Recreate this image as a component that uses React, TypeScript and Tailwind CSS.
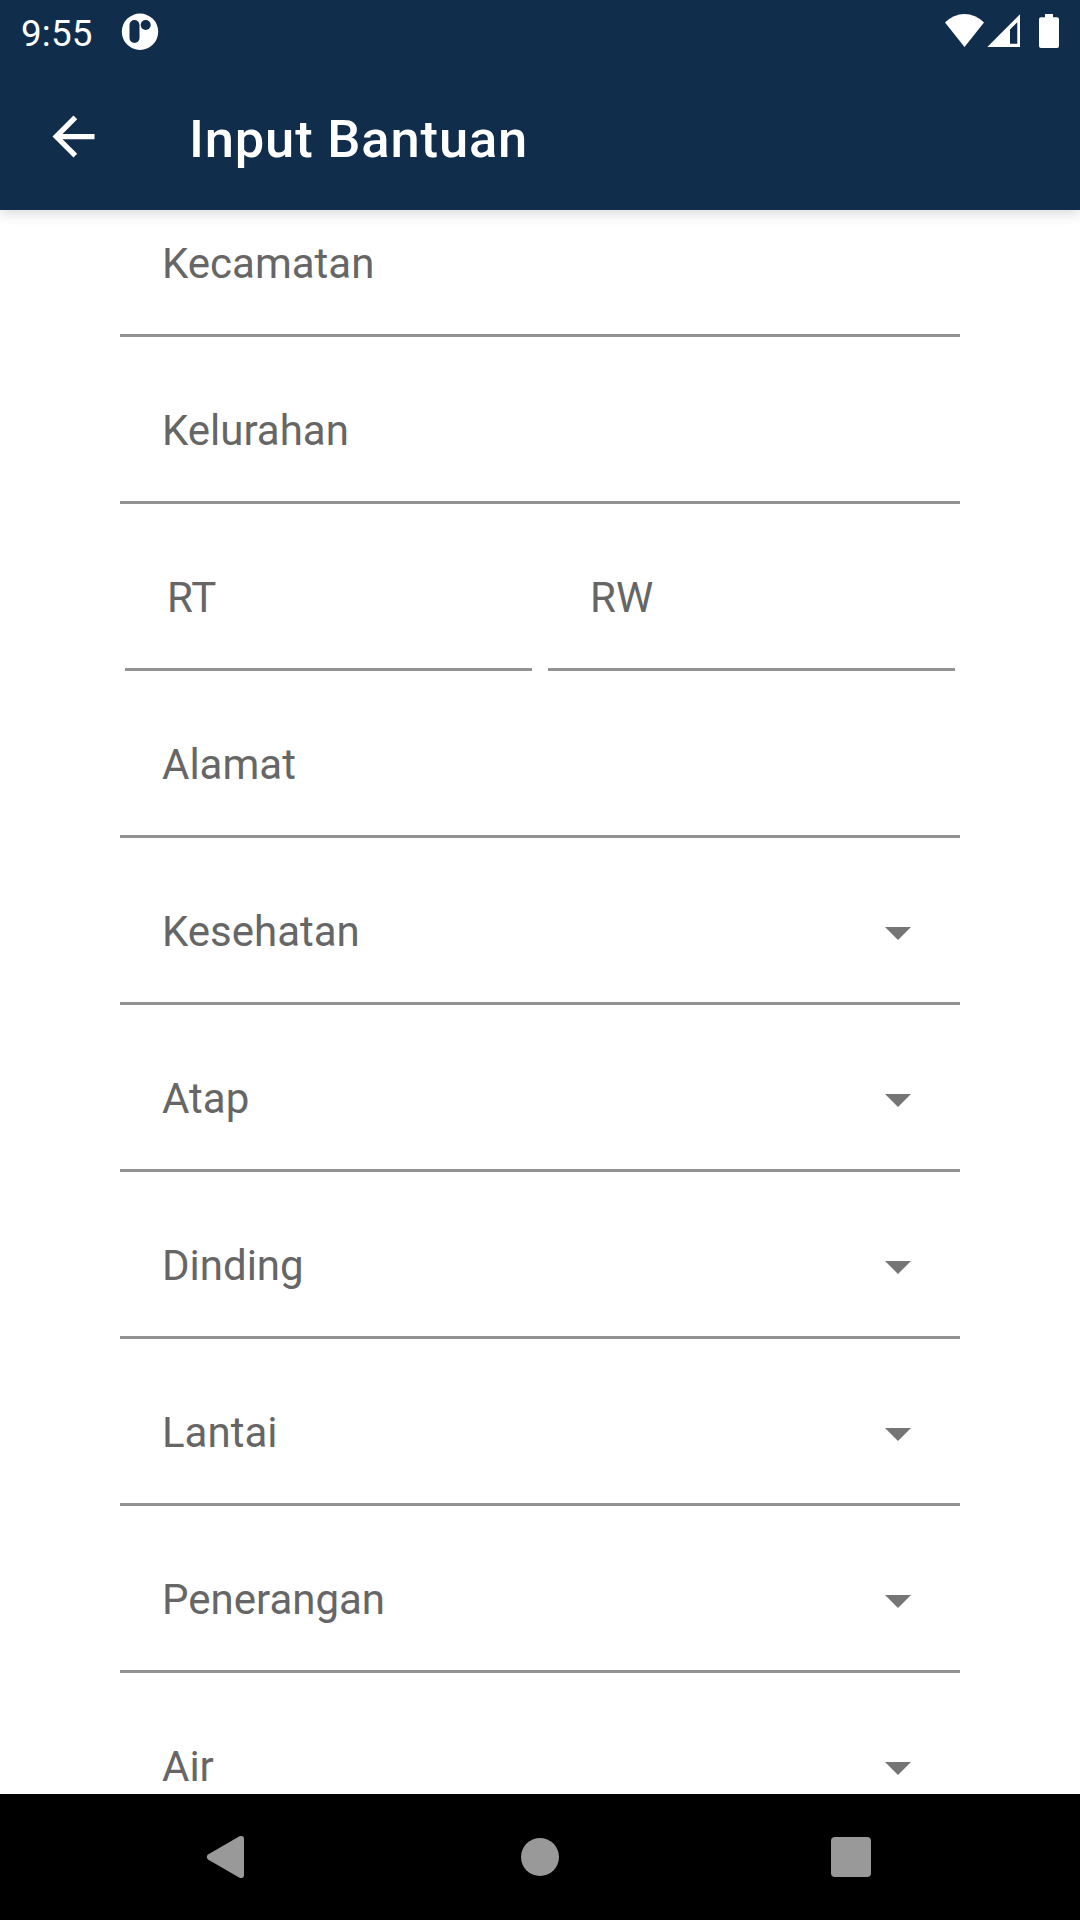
type Field = { label: string; select?: boolean };

const textFields: Field[] = [{ label: "Kecamatan" }, { label: "Kelurahan" }];
const moreFields: Field[] = [
  { label: "Alamat" },
  { label: "Kesehatan", select: true },
  { label: "Atap", select: true },
  { label: "Dinding", select: true },
  { label: "Lantai", select: true },
  { label: "Penerangan", select: true },
  { label: "Air", select: true },
];

function FieldRow({ label, select }: Field) {
  return (
    <div className="flex h-[167px] w-full shrink-0 items-end justify-between border-b-[3px] border-[#929292] pr-[49.500px] pb-[45px] pl-[42px]">
      <span className="text-[42px] leading-[50px] text-[#666666]">{label}</span>
      {select && (
        <svg className="mb-[17px] h-[13px] w-[26px]" viewBox="0 0 26 13" fill="#757575">
          <path d="M0 0H26L13 13Z" />
        </svg>
      )}
    </div>
  );
}

function StatusBar() {
  return (
    <div className="flex h-[63px] items-start text-white">
      <span className="mt-[12px] ml-[21px] w-[73px] text-[36.75px] leading-[44px] tracking-[0.200px]">9:55</span>
      <svg className="mt-[13px] ml-[27px] h-[38px] w-[38px]" viewBox="0 0 38 38">
        <circle cx="19" cy="18.7" r="18.2" fill="#fff" />
        <rect x="8.5" y="7" width="10" height="23" rx="5" fill="#102d4c" />
        <circle cx="24.7" cy="12" r="5" fill="#102d4c" />
      </svg>
      <svg className="mt-[14px] ml-auto h-[34px] w-[115px]" viewBox="0 0 115 34" fill="#fff">
        <path d="M0 8.6Q8.5 0 19.5 0T39 8.6L19.5 33Z" />
        <path fillRule="evenodd" d="M75 0.3V33H42.3ZM72.3 8.2L65 15.5V29.7H72.3Z" />
        <path d="M100 0h8v3.3h4a2 2 0 0 1 2 2V32a2 2 0 0 1-2 2H96a2 2 0 0 1-2-2V5.300a2 2 0 0 1 2-2h4Z" />
      </svg>
      <div className="w-5" />
    </div>
  );
}

export default function App() {
  return (
    <div className="flex h-[1920px] w-[1080px] flex-col overflow-hidden bg-white font-['Roboto',sans-serif]">
      <header className="z-10 h-[210px] shrink-0 bg-[#102d4c] shadow-[0_4px_12px_rgba(0,0,0,0.14)]">
        <StatusBar />
        <div className="flex h-[147px] items-center">
          <svg className="ml-[42px] h-[63px] w-[63px]" viewBox="0 0 24 24" fill="#fff">
            <path d="M20 11H7.830l5.590-5.590L12 4l-8 8 8 8 1.410-1.410L7.830 13H20v-2z" />
          </svg>
          <h1 className="mt-[5px] ml-[84px] text-[52.500px] leading-[62px] font-medium tracking-[0.840px] text-white">
            Input Bantuan
          </h1>
        </div>
      </header>
      <main className="flex-1 overflow-hidden px-[120px]">
        <form className="-mt-10 flex flex-col">
          {textFields.map((f) => (
            <FieldRow key={f.label} {...f} />
          ))}
          <div className="grid grid-cols-2 gap-4 px-[5px]">
            <FieldRow label="RT" />
            <FieldRow label="RW" />
          </div>
          {moreFields.map((f) => (
            <FieldRow key={f.label} {...f} />
          ))}
        </form>
      </main>
      <nav className="flex h-[126px] shrink-0 items-center bg-black">
        <svg className="ml-[206px] h-[44px] w-[40px]" viewBox="0 0 40 44" fill="#999">
          <path d="M2 19.600L33.500 1.300Q38 0 38 4V40Q38 44 33.500 42.700L2 24.400Q-0.500 22 2 19.600Z" />
        </svg>
        <div className="ml-[275px] h-[38px] w-[38px] rounded-full bg-[#999999]" />
        <div className="ml-[272px] size-10 rounded-[4px] bg-[#999999]" />
      </nav>
    </div>
  );
}
